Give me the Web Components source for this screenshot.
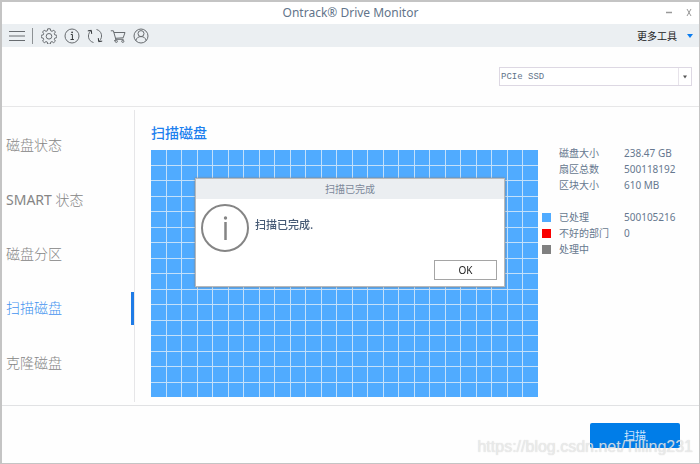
<!DOCTYPE html>
<html lang="zh-CN">
<head>
<meta charset="utf-8">
<title>Ontrack® Drive Monitor</title>
<style>
html, body { height: 100%; margin: 0; }
body { background: #e6e6e6; font-family: "Noto Sans", "Noto Sans CJK SC", sans-serif; color: #66788f; }
</style>
</head>
<body>
<drive-monitor></drive-monitor>
<script>
const define = (name, html, setup) => {
  const template = document.createElement('template');
  template.innerHTML = html;
  customElements.define(name, class extends HTMLElement {
    constructor() {
      super();
      this.attachShadow({ mode: 'open' }).append(template.content.cloneNode(true));
    }
    connectedCallback() { if (setup) setup(this, this.shadowRoot); }
  });
};

define('title-bar', `
<style>
:host { display: grid; grid-template-columns: 1fr auto 1fr; align-items: center; height: 22px; background: #fff; }
h1 { grid-column: 2; margin: 0; font-size: 12px; line-height: 16px; font-weight: 400; color: #62748a; }
.win { display: flex; justify-content: flex-end; gap: 8px; padding-right: 4px; }
button { width: 12px; height: 16px; padding: 0; border: 0; background: none; color: #999; display: grid; place-items: center; }
svg { width: 8px; height: 10px; fill: none; stroke: currentColor; }
</style>
<h1><slot></slot></h1>
<div class="win">
<button aria-label="最小化"><svg viewBox="0 0 8 10"><path d="M1 4.5h6" stroke-width="1.5"/></svg></button>
<button aria-label="关闭"><svg viewBox="0 0 8 10"><path d="M2 1l4 7M6 1l-4 7"/></svg></button>
</div>`);

define('tool-bar', `
<style>
:host { display: flex; align-items: center; height: 23px; padding: 0 6px; background: #ebeff2; }
button { border: 0; padding: 0; background: none; color: #686c70; display: flex; align-items: center; }
svg { display: block; fill: none; stroke: currentColor; stroke-width: 1; }
.sep { width: 1px; height: 16px; margin: 0 8px 0 7px; background: #8d9194; }
.icons { display: flex; gap: 7px; }
.more { margin-left: auto; gap: 10px; font: 10px/14px "Noto Sans CJK SC", sans-serif; color: #222; }
.more svg { fill: #0a7cf0; stroke: none; }
</style>
<button aria-label="菜单"><svg width="17" height="16"><path d="M1 3.5h16M1 8h16M1 12.5h16"/></svg></button>
<span class="sep"></span>
<div class="icons">
<button aria-label="设置"><svg width="16" height="16" viewBox="0 0 16 16"><path d="M6.7.8h2.6l.4 2 1.3.5 1.8-1.1 1.6 1.8-1.1 1.7.5 1.2 2 .4v2.3l-2 .5-.5 1.2 1.1 1.8-1.7 1.6-1.7-1.1-1.3.5-.4 2H6.7l-.4-2-1.3-.5-1.7 1.1-1.7-1.6 1.1-1.8-.5-1.2-2-.5V7.3l2-.4.5-1.2-1.1-1.7 1.6-1.8L5 3.3l1.3-.5z"/><circle cx="8" cy="8.3" r="2.8"/></svg></button>
<button aria-label="信息"><svg width="16" height="16" viewBox="0 0 16 16"><circle cx="8" cy="8" r="7"/><path d="M6.8 6.5h1.6v5M6.5 11.5h3.4" stroke="#35383b"/><circle cx="8.1" cy="4.3" r=".9" fill="#35383b" stroke="none"/></svg></button>
<button aria-label="刷新"><svg width="16" height="16" viewBox="0 0 16 16" stroke-width="1.2"><path d="M6.5 14.5C1.2 13.2-.2 7 3.6 2.9M9.5 1.5C14.8 2.8 16.2 9 12.4 13.1"/><path d="M.8 2.9l3.5-.6.4 3.6M15.2 13.1l-3.5.6-.4-3.6" stroke="#35383b"/></svg></button>
<button aria-label="购物车"><svg width="16" height="16" viewBox="0 0 16 16"><path d="M.8 2.8h2.6l2.4 8.5h7.8M4 4.5h11l-1.8 5.3-7.8.5M5.8 11.3l-1.4 1.3h1"/><circle cx="6.3" cy="13.3" r="1.1"/><circle cx="12.8" cy="13.3" r="1.1"/></svg></button>
<button aria-label="账户"><svg width="16" height="16" viewBox="0 0 16 16"><circle cx="8" cy="8" r="7"/><circle cx="8" cy="5.6" r="3"/><path d="M2.8 12.6C3.5 9.8 5.4 8.6 8 8.6s4.5 1.2 5.2 4"/></svg></button>
</div>
<button class="more"><slot></slot><svg width="6" height="5"><path d="M0 1h6L3 5z"/></svg></button>`);

define('drive-select', `
<style>
:host { display: flex; justify-content: flex-end; padding: 20px 7px; border-bottom: 1px solid #e7e7e8; }
label { display: grid; width: 193px; }
select, svg { grid-area: 1 / 1; }
select { appearance: none; box-sizing: border-box; width: 100%; height: 19px; padding: 0 16px 0 1px; border: 1px solid #ddd8e3; border-radius: 0; background: #fff; color: #62748a; font: 9px/16px "Liberation Mono", monospace; }
svg { justify-self: end; pointer-events: none; }
</style>
<label><select aria-label="驱动器"><option>PCIe SSD</option></select>
<svg width="14" height="19"><path d="M.5 1v17" stroke="#e7e3ea"/><path d="M5 8.5h4l-2 3z" fill="#555"/></svg></label>`);

define('nav-item', `
<style>
:host { display: flex; align-items: center; padding-left: 4px; color: #858585; border-right: 3px solid transparent; font-size: 14px; line-height: 20px; }
:host([active]) { color: #4594ef; border-image: linear-gradient(transparent 21%, #1e7be6 21% 79%, transparent 79%) 1; }
a { color: inherit; text-decoration: none; font-weight: 300; }
::slotted(b) { font-weight: 400; }
</style>
<a href="#"><slot></slot></a>`);

define('side-nav', `
<style>
:host { display: block; padding: 3px 0; }
nav { box-sizing: border-box; height: 100%; display: grid; grid-auto-rows: 1fr; padding: 8px 0 12px; border-right: 1px solid #e6e6e8; }
</style>
<nav><slot></slot></nav>`);

define('block-map', `
<style>
:host { display: grid; grid-template-columns: repeat(25, 1fr); grid-template-rows: repeat(16, 1fr); gap: 1px; background: #c3e0fa; }
i { background: #50abff; }
</style>`, (host, root) => {
  for (let n = 0; n < 25 * 16; n++) root.append(document.createElement('i'));
});

define('info-row', `
<style>
:host { display: grid; grid-template-columns: 10px 58px 1fr; column-gap: 7px; align-items: center; font-size: 10px; line-height: 16px; }
i { width: 9px; height: 9px; background: var(--mark, transparent); }
</style>
<i></i><slot name="label"></slot><slot></slot>`);

define('info-message', `
<style>
:host { position: fixed; inset: 0; z-index: 1; display: grid; place-items: center; }
section { box-sizing: border-box; width: 310px; background: #fff; border: 1px solid #b9b9b9; box-shadow: 0 0 2px #8b7c70; }
h2 { margin: 0; background: #ebeef1; text-align: center; font: 400 10px/20px "Noto Sans CJK SC", sans-serif; color: #7c8899; }
.body { display: flex; gap: 6px; padding: 5px 4px 0 5px; }
p { margin: 11px 0 0; font: 500 11px/18px "Noto Sans CJK SC", sans-serif; color: #465a75; }
.foot { display: flex; justify-content: flex-end; padding: 8px 7px 6px; }
button { width: 63px; height: 20px; padding: 0; border: 1px solid #a5a5a5; border-radius: 0; background: #fff; color: #222; font: 10px/16px "Noto Sans", sans-serif; }
</style>
<section role="dialog" aria-labelledby="t">
<h2 id="t"><slot name="title"></slot></h2>
<div class="body">
<svg width="48" height="48" fill="none" stroke="#858585"><circle cx="24" cy="24" r="23" stroke-width="2"/><path d="M24.5 18v18" stroke-width="2.5"/><circle cx="24.5" cy="14" r="1.7" fill="#858585" stroke="none"/></svg>
<p><slot></slot></p></div>
<div class="foot"><button>OK</button></div>
</section>`);

define('action-bar', `
<style>
:host { display: flex; justify-content: flex-end; align-items: flex-start; height: 58px; box-sizing: border-box; padding: 17px 19px 0; border-top: 1px solid #e1e2e4; }
button { width: 90px; height: 25px; padding: 0; border: 0; border-radius: 2px; background: #007de8; color: #cfe6ff; font: 11px/25px "Noto Sans CJK SC", sans-serif; }
</style>
<button><slot></slot></button>`);

define('page-mark', `
<style>
:host { position: absolute; right: 6px; bottom: 6px; pointer-events: none; font: 16px/20px "Liberation Sans", sans-serif; color: rgba(240,240,240,.8); text-shadow: 0 0 1px rgba(130,130,130,.4); }
</style>
<slot></slot>`);

define('drive-monitor', `
<style>
:host { display: flex; flex-direction: column; box-sizing: border-box; height: 100vh; position: relative; background: #fefefe; border: 1px solid #c4c4c4; border-top-width: 2px; border-left-width: 2px; }
main { flex: 1; min-height: 0; display: grid; grid-template-columns: 133px 1fr 157px; }
.scan { display: flex; flex-direction: column; padding: 15px 4px 8px 16px; }
h2 { margin: 0; padding-bottom: 6px; font-size: 14px; line-height: 22px; font-weight: 500; color: #1c7fee; }
block-map { flex: 1; }
aside { padding-top: 38px; }
.legend { padding-top: 16px; }
</style>
<title-bar>Ontrack® Drive Monitor</title-bar>
<tool-bar>更多工具</tool-bar>
<drive-select></drive-select>
<main>
<side-nav>
<nav-item>磁盘状态</nav-item>
<nav-item><b>SMART</b> 状态</nav-item>
<nav-item>磁盘分区</nav-item>
<nav-item active>扫描磁盘</nav-item>
<nav-item>克隆磁盘</nav-item>
</side-nav>
<div class="scan"><h2>扫描磁盘</h2><block-map></block-map></div>
<aside>
<info-row><span slot="label">磁盘大小</span><span>238.47 GB</span></info-row>
<info-row><span slot="label">扇区总数</span><span>500118192</span></info-row>
<info-row><span slot="label">区块大小</span><span>610 MB</span></info-row>
<div class="legend">
<info-row style="--mark:#50abff"><span slot="label">已处理</span><span>500105216</span></info-row>
<info-row style="--mark:#f90000"><span slot="label">不好的部门</span><span>0</span></info-row>
<info-row style="--mark:#808080"><span slot="label">处理中</span></info-row>
</div>
</aside>
</main>
<action-bar>扫描</action-bar>
<info-message><span slot="title">扫描已完成</span>扫描已完成.</info-message>
<page-mark>https://blog.csdn.net/Tilling231</page-mark>`);
</script>
</body>
</html>
